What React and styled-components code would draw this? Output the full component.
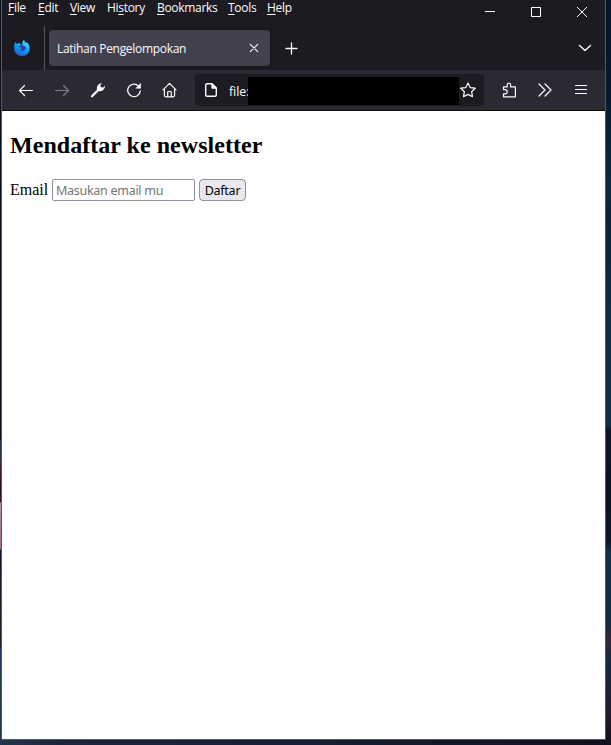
import React from "react";
import styled, { createGlobalStyle } from "styled-components";

const Global = createGlobalStyle`
  * { box-sizing: border-box; }
  body { margin: 0; overflow: hidden; }
`;

const Desktop = styled.div`
  width: 611px;
  height: 745px;
  padding: 0 5px 5px 1px;
  background:
    linear-gradient(#0a1421 0 440px, #22304a 440px 460px, #4a1228 470px, #25101c 490px, #500f2a 502px, #b49a98 503px, #a06a72 549px, #10182a 550px, #251c2c 600px, #2a1a2c 645px, #243a5c 650px, #24344e 745px) left / 1px 100% no-repeat,
    linear-gradient(#04182a 0, #06192b 90px, #0b2a40 190px, #0b2136 215px, #0d2b42 300px, #103049 425px, #0b1526 430px, #0a1322 500px, #0b1727 540px, #123047 552px, #112a40 620px, #302839 640px, #15283e 665px, #221b2d 715px, #120e1b 745px) right / 6px 100% no-repeat,
    linear-gradient(90deg, #23354a, #1b2438 60px, #181e31 300px, #10101d) bottom / 100% 6px no-repeat;
`;

const Window = styled.div`
  display: flex;
  flex-direction: column;
  width: 605px;
  height: 740px;
  border: solid #55575a;
  border-width: 0 1px 1px;
  background: #fff;
  color: #fbfbfe;
  font: 12px/16px "Open Sans", "Noto Sans", sans-serif;
`;

const TitleBar = styled.div`
  display: flex;
  height: 26px;
  flex: none;
  background: #1c1b22;
`;

const Menu = styled.nav`
  display: flex;
  gap: 12px;
  padding-left: 6px;
`;

const MenuItem = styled.span`
  width: ${(p) => p.$w}px;
  font-size: 12px;
  letter-spacing: -0.3px;
  white-space: nowrap;
  u { text-underline-offset: 2px; text-decoration-thickness: 1px; }
`;

const WindowButtons = styled.div`
  display: flex;
  margin-left: auto;
`;

const WindowButton = styled.span`
  display: flex;
  justify-content: center;
  width: 46px;
  height: 24px;
  align-items: center;
`;

const TabBar = styled.div`
  display: flex;
  flex: none;
  height: 44px;
  background: #1c1b22;
`;

const PinnedView = styled.div`
  width: 43px;
  border-right: 1px solid #57565d;
  padding: 13px 0 0 11px;
  line-height: 0;
`;

const Tab = styled.div`
  display: flex;
  align-items: center;
  width: 221px;
  height: 36px;
  margin: 4px 0 0 4px;
  padding: 0 11px 0 8px;
  border-radius: 4px;
  background: #42414d;
  box-shadow: 0 0 3px #111016;
`;

const TabTitle = styled.span`
  flex: 1;
  padding-top: 2px;
  font-size: 12px;
  letter-spacing: -0.31px;
  white-space: nowrap;
`;

const NewTab = styled.div`
  padding: 16px 0 0 15px;
  line-height: 0;
`;

const TabList = styled.div`
  margin-left: auto;
  padding: 18px 13px 0 0;
  line-height: 0;
`;

const Toolbar = styled.div`
  display: flex;
  align-items: center;
  flex: none;
  height: 41px;
  border-bottom: 1px solid #0c0c0d;
  background: #2b2a33;
`;

const ToolButton = styled.span`
  display: flex;
  align-items: center;
  justify-content: center;
  flex: none;
  width: ${(p) => p.$w || 36}px;
  opacity: ${(p) => (p.$dim ? 0.4 : 1)};
`;

const NavButtons = styled.div`
  display: flex;
  width: 193px;
  padding-left: 6px;
`;

const AddressBar = styled.div`
  display: flex;
  align-items: center;
  width: 289px;
  height: 32px;
  padding-left: 8px;
  border-radius: 4px;
  background: #1c1b22;
`;

const Scheme = styled.span`
  width: 19px;
  margin-left: 10px;
  font-size: 12.5px;
  letter-spacing: -0.1px;
  padding-top: 3px;
  white-space: nowrap;
`;

const Redaction = styled.span`
  width: 211px;
  height: 28px;
  margin-top: 2px;
  background: #000;
`;

const RightTools = styled.div`
  display: flex;
  padding-left: 8px;
`;

const Page = styled.main`
  flex: 1;
  padding: 20px 8px;
  color: #000;
  font: 16px "Liberation Serif", serif;
`;

const Heading = styled.h2`
  margin: 0 0 20px;
  font-size: 24px;
  line-height: 28px;
  letter-spacing: 0.04px;
`;

const Form = styled.div`
  display: flex;
  align-items: center;
  height: 22px;
`;

const Label = styled.label`
  width: 42px;
`;

const EmailInput = styled.input`
  width: 143px;
  height: 22px;
  padding: 1px 3px 0;
  border: 1px solid #8f8f9d;
  border-radius: 2px;
  background: #fff;
  font: 12.5px "Noto Sans", sans-serif;
  letter-spacing: -0.28px;
  &::placeholder { color: #757575; opacity: 1; }
`;

const Submit = styled.button`
  width: 47px;
  height: 22px;
  margin-left: 4px;
  padding: 1px 0 0;
  border: 1px solid #8f8f9d;
  border-radius: 4px;
  background: #e9e9ed;
  color: #000;
  font: 12.5px "Noto Sans", sans-serif;
  letter-spacing: -0.25px;
`;

const Icon = ({ size = 16, sw = 1.3, children }) => (
  <svg width={size} height={size} viewBox={`0 0 ${size} ${size}`} fill="none" stroke="#fbfbfe" strokeWidth={sw} strokeLinecap="round" strokeLinejoin="round">
    {children}
  </svg>
);

const BrowserLogo = () => (
  <svg width="18" height="18" viewBox="0 0 18 18">
    <defs>
      <linearGradient id="globe" x1="0.8" y1="0" x2="0.3" y2="1">
        <stop offset="0" stopColor="#62e8fa" />
        <stop offset="0.45" stopColor="#16a8f5" />
        <stop offset="1" stopColor="#0b62dc" />
      </linearGradient>
    </defs>
    <path d="M2.400 3.100 3.800 4.700 5.700 4.500 6.800 3.400 7.200 5.300 9.400 5.900C8.800 3.900 9.500 1.600 11.100.7c.3 1.700 1.100 2.400 2 3.400l.6-1c2 1.800 3.100 4.200 3 6.400-.2 4.400-3.300 7.500-7.500 7.500S1.500 14 1.200 10.200C1 7.400 1.300 4.800 2.400 3.100Z" fill="url(#globe)" />
    <path d="M6 7.300c1-1.300 2.800-1 4.600-.6 2.200.5 2.700 2.300 1.700 3.900-1.300 1.900-4.400 1.700-5.400-.1l2.200-.7C7.800 8.800 6.700 8.600 6 7.300Z" fill="#2740ad" />
  </svg>
);

const menus = [
  ["", "F", "ile", 18],
  ["", "E", "dit", 20],
  ["", "V", "iew", 25],
  ["Hi", "s", "tory", 38],
  ["", "B", "ookmarks", 59],
  ["", "T", "ools", 27],
  ["", "H", "elp", 25],
];

export default function App() {
  return (
    <Desktop>
      <Global />
      <Window>
        <TitleBar>
          <Menu>
            {menus.map(([pre, key, post, w]) => (
              <MenuItem key={post} $w={w}>{pre}<u>{key}</u>{post}</MenuItem>
            ))}
          </Menu>
          <WindowButtons>
            <WindowButton>
              <svg width="10" height="10"><path d="M0 4.500H10" stroke="#fff" /></svg>
            </WindowButton>
            <WindowButton>
              <svg width="10" height="10"><path d="M.5.5H9.500V9.500H.5Z" stroke="#fff" fill="none" /></svg>
            </WindowButton>
            <WindowButton>
              <svg width="10" height="10"><path d="M0 0 10 10M10 0 0 10" stroke="#fff" fill="none" /></svg>
            </WindowButton>
          </WindowButtons>
        </TitleBar>
        <TabBar>
          <PinnedView><BrowserLogo /></PinnedView>
          <Tab>
            <TabTitle>Latihan Pengelompokan</TabTitle>
            <Icon size={10} sw={1.1}><path d="M1.300 1.300 8.700 8.700M8.700 1.300 1.300 8.700" /></Icon>
          </Tab>
          <NewTab><Icon size={13} sw={1.3}><path d="M6.500 1V12M1 6.500H12" /></Icon></NewTab>
          <TabList><Icon size={14} sw={1.4}><path d="M1.500 1.500 7 6.500 12.500 1.500" /></Icon></TabList>
        </TabBar>
        <Toolbar>
          <NavButtons>
            <ToolButton><Icon sw={1.2}><path d="M14.500 8.500H1.500M6.500 3.500 1.500 8.500 6.500 13.500" /></Icon></ToolButton>
            <ToolButton $dim><Icon sw={1.2}><path d="M1.500 8.500H14.500M9.500 3.500 14.500 8.500 9.500 13.500" /></Icon></ToolButton>
            <ToolButton>
              <Icon>
                <path d="M2 14.300 8 8.300" strokeWidth="2.300" />
                <path d="M7 7.800C6.300 4.300 8.400 1.200 12 1.300L10.300 3.300 11 5.200 13.200 5.500 14.900 3.700C15.200 7 12.500 9.500 9 9.200Z" fill="#fbfbfe" stroke="none" />
              </Icon>
            </ToolButton>
            <ToolButton>
              <Icon sw={1.3}>
                <path d="M12.700 4.100A6.300 6.300 0 1 0 14.300 9" />
                <path d="M14.600 1.800V6.200H10.200Z" fill="#fbfbfe" strokeWidth=".6" />
              </Icon>
            </ToolButton>
            <ToolButton $w={35}><Icon sw={1.2}><path d="M1 7.900 7.500 1.400 14 7.900M2.400 7V13.300Q2.400 14.800 3.900 14.800H11.100Q12.600 14.800 12.600 13.300V7M5.700 14.500V10.300Q5.700 9.500 6.500 9.500H8.500Q9.300 9.500 9.300 10.300V14.500" /></Icon></ToolButton>
          </NavButtons>
          <AddressBar>
            <Icon sw={1.4}>
              <path d="M4 1.700H9L13.300 6V13Q13.300 14.300 12 14.300H4Q2.700 14.300 2.700 13V3Q2.700 1.700 4 1.700Z" />
              <path d="M9 2V6H13Z" fill="#fbfbfe" />
            </Icon>
            <Scheme>file:</Scheme>
            <Redaction />
            <ToolButton $w={18}><Icon sw={1.2}><path d="M8 1 10.200 5.600 15.200 6.200 11.600 9.700 12.500 14.700 8 12.400 3.500 14.700 4.400 9.700 .8 6.200 5.800 5.600Z" /></Icon></ToolButton>
          </AddressBar>
          <RightTools>
            <ToolButton>
              <Icon sw={1.2}><path d="M1.500 7.300V4.900H5.200V3Q5.200 1.100 6.900 1.100T8.600 3V4.900H13.400V14.800H1.500V11.800H3Q5.200 11.800 5.200 9.700T3 7.600H1.500Z" /></Icon>
            </ToolButton>
            <ToolButton $w={34}><Icon sw={1.2}><path d="M2 2 8 8 2 14M8 2 14 8 8 14" /></Icon></ToolButton>
            <ToolButton $w={38}><Icon sw={1.2}><path d="M2.500 3.500H13.500M2.500 7.500H13.500M2.500 11.500H13.500" /></Icon></ToolButton>
          </RightTools>
        </Toolbar>
        <Page>
          <Heading>Mendaftar ke newsletter</Heading>
          <Form>
            <Label htmlFor="email">Email</Label>
            <EmailInput id="email" placeholder="Masukan email mu" />
            <Submit>Daftar</Submit>
          </Form>
        </Page>
      </Window>
    </Desktop>
  );
}
